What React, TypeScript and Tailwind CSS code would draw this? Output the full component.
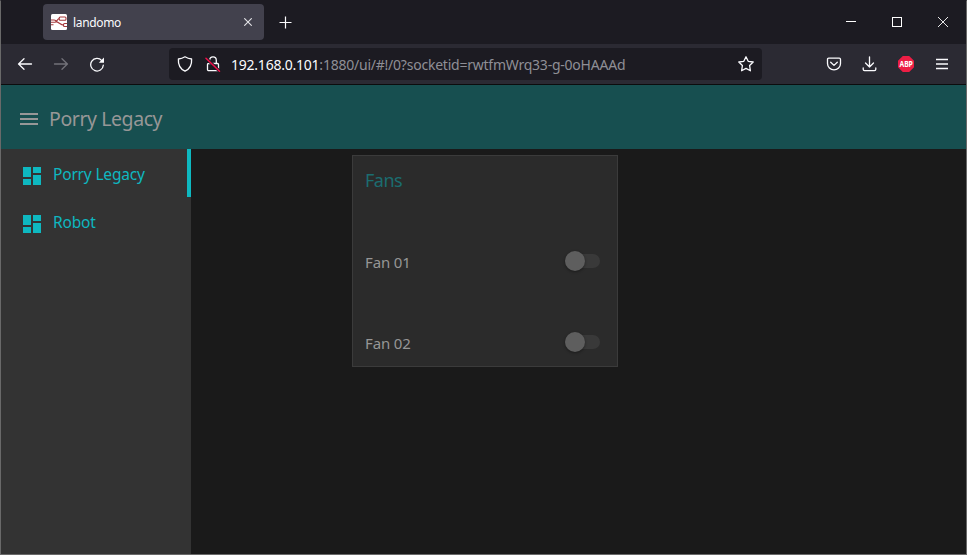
import React from "react";

function NodeRedIcon() {
  return (
    <svg className="h-4 w-4 shrink-0" viewBox="0 0 16 16" fill="none">
      <rect width="16" height="16" rx="1.5" fill="#fff" />
      <g stroke="#a63a3d" strokeWidth="1.1">
        <path d="M0 6h3c1.500 0 1.800.8 2.600 1.200M0 8.300h4c1.600 0 2.400-3.800 4.500-3.800M5 7.600c3 .2 4 3.400 8 3.600" />
        <rect x="8.200" y="3" width="6.800" height="3.200" rx="1" fill="#fff" />
        <path d="M0 10.800h2.500M16 9.500h-2.500a1 1 0 0 0-1 1v1a1 1 0 0 0 1 1H16" />
      </g>
    </svg>
  );
}

function TabStrip() {
  return (
    <div className="flex h-11 items-start bg-[#1c1b22] text-[#fbfbfe]">
      <div className="ml-[42px] mt-1 flex h-9 w-[221px] items-center rounded bg-[#42414d] pl-2 pr-3">
        <NodeRedIcon />
        <span className="ml-[6px] mt-px flex-1 text-[12px] leading-4 tracking-[-0.35px]">landomo</span>
        <svg className="h-2 w-2" viewBox="0 0 8 8" stroke="#e4e4e8" strokeWidth="1.1">
          <path d="M.3.3l7.4 7.4M7.7.3.3 7.7" />
        </svg>
      </div>
      <svg className="ml-[15px] mt-4 h-[13px] w-[13px]" viewBox="0 0 13 13" stroke="currentColor" strokeWidth="1.2">
        <path d="M.5 6.5h12M6.5.5v12" />
      </svg>
      <div className="ml-auto flex h-11 items-center">
        <svg className="mr-9 h-[10px] w-[10px]" viewBox="0 0 10 10" stroke="#fff">
          <path d="M0 4.5h10" />
        </svg>
        <svg className="mr-9 h-[10px] w-[10px]" viewBox="0 0 10 10" stroke="#fff" fill="none">
          <rect x=".5" y=".5" width="9" height="9" />
        </svg>
        <svg className="mr-[18px] h-[10px] w-[10px]" viewBox="0 0 10 10" stroke="#fff">
          <path d="M0 0l10 10M10 0L0 10" strokeWidth=".9" />
        </svg>
      </div>
    </div>
  );
}

const line = {
  fill: "none",
  stroke: "#fbfbfe",
  strokeWidth: 1.3,
  strokeLinecap: "round" as const,
  strokeLinejoin: "round" as const,
};

function Toolbar() {
  return (
    <div className="flex h-10 items-center bg-[#2b2a33] text-[#fbfbfe]">
      <svg className="ml-4 h-4 w-4" viewBox="0 0 16 16" {...line}>
        <path d="M1.5 8h13M7 2.8L1.6 8 7 13.2" />
      </svg>
      <svg className="ml-5 h-4 w-4" viewBox="0 0 16 16" {...line} stroke="#73727a">
        <path d="M1.5 8h13M9 2.8L14.4 8 9 13.2" />
      </svg>
      <svg className="ml-5 h-4 w-4" viewBox="0 0 16 16" {...line}>
        <path d="M14.3 9.2A6.3 6.3 0 1 1 12.8 4.600" />
        <path d="M15 1.500v5.200H9.800z" fill="#fbfbfe" stroke="none" />
      </svg>
      <div className="ml-16 flex h-8 w-[593px] items-center rounded bg-[#1c1b22]">
        <svg className="ml-2 h-4 w-4 shrink-0" viewBox="0 0 16 16" {...line}>
          <path d="M8 .8c2 1.3 4 2 6.6 2.2.4 5.500-1.300 9.700-6.600 12.200C2.700 12.700 1 8.500 1.400 3 4 2.800 6 2.100 8 .8z" />
        </svg>
        <svg className="ml-3 h-4 w-4 shrink-0" viewBox="0 0 16 16" {...line}>
          <path d="M4.700 4V4.200a3.300 3.300 0 0 1 6.600 0v3M3.500 7.500h9a1 1 0 0 1 1 1v5a1.200 1.200 0 0 1-1.200 1.200H3.700a1.200 1.200 0 0 1-1.200-1.200v-5a1 1 0 0 1 1-1z" />
          <path d="M1 2.200l13.500 13" stroke="#1c1b22" strokeWidth="3" />
          <path d="M1 2.200l13.500 13" stroke="#f0104a" strokeWidth="1.500" />
        </svg>
        <span className="ml-[10px] mt-px whitespace-nowrap text-[14px] leading-5 tracking-[-0.23px] text-[#8f8f96]">
          <span className="text-[#fbfbfe]">192.168.0.101</span>:1880/ui/#!/0?socketid=rwtfmWrq33-g-0oHAAAd
        </span>
        <svg className="ml-auto mr-2 h-4 w-4 shrink-0" viewBox="0 0 16 16" {...line}>
          <path d="M8 .8l2.200 4.500 5 .7-3.600 3.500.8 5.300L8 12.400l-4.400 2.400.8-5.300L.8 6l5-.7z" />
        </svg>
      </div>
      <div className="ml-16 flex items-center gap-5">
        <svg className="h-4 w-4" viewBox="0 0 16 16" {...line}>
          <path d="M2.700 2.200h10.600a1.200 1.200 0 0 1 1.200 1.200v4a6.500 6.500 0 0 1-13 0v-4a1.200 1.200 0 0 1 1.200-1.200zM4.700 6.200L8 9.400l3.300-3.200" />
        </svg>
        <svg className="h-4 w-4" viewBox="0 0 16 16" {...line}>
          <path d="M7.500 .8v10.200M3.500 7l4 4 4-4M1.200 12v1.300c0 .8.600 1.300 1.300 1.300h10c.7 0 1.300-.5 1.300-1.300V12" />
        </svg>
        <div className="flex h-4 w-4 items-center justify-center bg-[#ed1e45] text-white [clip-path:polygon(30%_0,70%_0,100%_30%,100%_70%,70%_100%,30%_100%,0_70%,0_30%)]">
          <span className="scale-x-[0.8] text-[8.500px] font-bold leading-none tracking-[-0.2px]">ABP</span>
        </div>
        <svg className="h-4 w-4" viewBox="0 0 16 16" {...line} strokeLinecap="butt">
          <path d="M2 3.500h12M2 8h12M2 12.500h12" />
        </svg>
      </div>
    </div>
  );
}

function NavItem({ label, active = false }: { label: string; active?: boolean }) {
  return (
    <div className={`flex h-12 items-center pl-5 text-[#0eb8c0] ${active ? "border-r-4 border-[#0eb8c0]" : ""}`}>
      <svg className="mt-1.5 h-6 w-6 shrink-0" viewBox="0 0 24 24" fill="currentColor">
        <path d="M2 3h8v10H2zM12 3h8v6h-8zM2 15h8v6H2zM12 11h8v10h-8z" />
      </svg>
      <span className="ml-2 mt-px whitespace-nowrap text-[15.500px] leading-6 tracking-[-0.18px]">{label}</span>
    </div>
  );
}

function FanRow({ label }: { label: string }) {
  return (
    <div className="flex h-12 items-center justify-between pl-3 pr-[17px]">
      <span className="mt-0.5 text-[15px] leading-6 tracking-[-0.15px] text-[#969696]">{label}</span>
      <div className="flex h-[14px] w-[35px] items-center rounded-full bg-[#393939]">
        <div className="h-5 w-5 rounded-full bg-[#5e5e5e] shadow-[0_1px_3px_rgba(0,0,0,0.4)]" />
      </div>
    </div>
  );
}

export default function App() {
  return (
    <div className="flex h-[555px] w-[967px] flex-col overflow-hidden border border-[#696969] border-t-[#1c1b22] bg-[#1a1a1a] font-['Noto_Sans',sans-serif]">
      <div className="-mt-px">
        <TabStrip />
        <Toolbar />
      </div>
      <header className="flex h-[65px] shrink-0 items-center border-t border-[#0c0c0d] bg-[#174f50] pl-[19px] text-[#979797]">
        <svg className="mt-[3px] h-3 w-[18px]" viewBox="0 0 18 12" fill="currentColor">
          <path d="M0 0h18v2H0zM0 5h18v2H0zM0 10h18v2H0z" />
        </svg>
        <span className="ml-[11px] mt-1 text-[19.500px] leading-7 tracking-[-0.42px]">Porry Legacy</span>
      </header>
      <div className="flex min-h-0 flex-1">
        <nav className="w-[190px] shrink-0 bg-[#333333]">
          <NavItem label="Porry Legacy" active />
          <NavItem label="Robot" />
        </nav>
        <main className="flex-1 pl-[161px] pt-1.5">
          <section className="flex h-[212px] w-[266px] flex-col border border-[#3b3b3b] bg-[#2b2b2b]">
            <h2 className="ml-3 mt-[11px] h-[70px] text-[18px] leading-[26px] tracking-[-0.5px] text-[#1b6d70]">Fans</h2>
            <FanRow label="Fan 01" />
            <div className="h-[33px]" />
            <FanRow label="Fan 02" />
          </section>
        </main>
      </div>
    </div>
  );
}
